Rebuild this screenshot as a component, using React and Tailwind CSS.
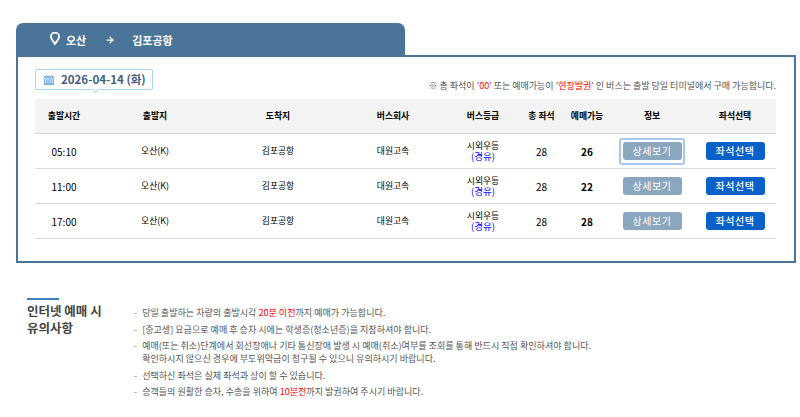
import React from 'react';
import { ArrowRight } from 'lucide-react';

const rows = [
  { time: '05:10', left: 26, focus: true },
  { time: '11:00', left: 22 },
  { time: '17:00', left: 28 },
];

const heads = ['출발시간', '출발지', '도착지', '버스회사', '버스등급', '총 좌석', '예매가능', '정보', '좌석선택'];
const widths = ['w-[58px]', 'w-[124px]', 'w-[122px]', 'w-[108px]', 'w-[72px]', 'w-[45px]', 'w-[46px]', 'w-[84px]', 'w-[82px]'];

function Note({ children }) {
  return (
    <li className="flex gap-[5px] leading-[13px]">
      <span className="text-[#888]">-</span>
      <p>{children}</p>
    </li>
  );
}

export default function App() {
  return (
    <div className="w-[800px] h-[417px] overflow-hidden bg-white pt-[23px] pl-[16px] text-black" style={{ fontFamily: '"Noto Sans CJK KR", "Noto Sans", sans-serif' }}>
      {/* Route tab */}
      <div className="w-[389px] h-[34px] bg-[#4b7499] rounded-t-[7px] flex items-center pl-[34px] text-white text-[11px] font-bold">
        <svg width="10" height="13" viewBox="0 0 11 14" fill="none" stroke="currentColor" strokeWidth="2" className="mr-[6px] -mt-[3px]">
          <path d="M5.5 13C3.5 10 1 7.6 1 5a4.500 4.500 0 0 1 9 0c0 2.600-2.500 5-4.500 8z" />
        </svg>
        <span>오산</span>
        <ArrowRight size={10} strokeWidth={3} className="ml-[19px] mr-[17px]" />
        <span>김포공항</span>
      </div>

      {/* Panel */}
      <div className="w-[780px] h-[208px] -mt-[2px] border-2 border-[#4b7499] bg-white pt-[12px] pl-[17px]">
        <div className="flex items-end w-[741px]">
          <div className="relative w-[118px] h-[21px] border border-[#a9d3f5] rounded-[2px] flex items-center pl-[8px] gap-[7px] text-[#44607f] text-[11.5px] font-bold">
            <svg width="10" height="10" viewBox="0 0 10 10" className="text-[#7db5e6]" fill="currentColor">
              <path d="M2 0h1v1.500H2zM7 0h1v1.500H7zM0 1h10v2H0zM0 3.500h10V10H0zM1 4.500v1h1.500v-1zM3.500 4.500v1h1v-1zM5.500 4.500v1h1v-1zM7.500 4.500v1H9v-1zM1 6.500v1h1.500v-1zM3.500 6.500v1h1v-1zM5.500 6.500v1h1v-1zM7.500 6.500v1H9v-1z" fillRule="evenodd" />
            </svg>
            <span>2026-04-14 (화)</span>
            <div className="absolute left-[57px] -bottom-[3px] w-[5px] h-[5px] rotate-45 bg-white border-r border-b border-[#a9d3f5]" />
          </div>
          <p className="ml-auto -mb-[2px] text-[9px] leading-[12px] text-[#555]">
            ※ 총 좌석이 '<span className="text-[#f00]">00</span>' 또는 예매가능이 '<span className="text-[#f00]">현장발권</span>' 인 버스는 출발 당일 터미널에서 구매 가능합니다.
          </p>
        </div>

        <table className="mt-[9px] w-[741px] table-fixed text-[8.8px] text-center">
          <thead>
            <tr className="h-[34px] bg-[#f3f3f3] border-b border-[#d5d5d5]">
              {heads.map((h, i) => (
                <th key={h} className={`${widths[i]} font-bold`}>{h}</th>
              ))}
            </tr>
          </thead>
          <tbody>
            {rows.map((r) => (
              <tr key={r.time} className="h-[35px] border-b border-[#dcdcdc]">
                <td className="pt-[1px] text-[10px]">{r.time}</td>
                <td className="pt-[1px]">오산(K)</td>
                <td className="pt-[1px]">김포공항</td>
                <td className="pt-[1px]">대원고속</td>
                <td className="pt-[1px] leading-[11px]">
                  시외우등
                  <br />
                  <span className="text-[#0000ff] text-[9.5px]">(경유)</span>
                </td>
                <td className="pt-[1px] text-[10px]">28</td>
                <td className="pt-[1px] text-[10px] font-bold">{r.left}</td>
                <td className="pt-[1px]">
                  <div className={`w-[66px] h-[27px] mx-auto flex items-center justify-center rounded-[3px] border-2 ${r.focus ? 'border-[#a5c5f2]' : 'border-transparent'}`}>
                    <button className="w-[59px] h-[18px] rounded-[3px] bg-[#8ba6bf] text-white text-[10px] leading-[18px] tracking-[0.6px]">
                      상세보기
                    </button>
                  </div>
                </td>
                <td className="pt-[1px]">
                  <button className="w-[59px] h-[18px] mx-auto block rounded-[3px] bg-[#0a60c9] text-white text-[10px] font-medium leading-[18px] tracking-[0.6px]">
                    좌석선택
                  </button>
                </td>
              </tr>
            ))}
          </tbody>
        </table>
      </div>

      {/* Notice */}
      <div className="flex mt-[35px] pl-[11px]">
        <div className="w-[107px]">
          <div className="w-[32px] h-[2px] bg-[#3f82c4]" />
          <h3 className="mt-[2px] text-[12.5px] leading-[17px] font-bold text-[#444]">
            인터넷 예매 시
            <br />
            유의사항
          </h3>
        </div>
        <ul className="pt-[8px] text-[9.05px] text-[#555] flex flex-col gap-[3.5px]">
          <Note>당일 출발하는 차량의 출발시각 <span className="text-[#f00]">20분 이전</span>까지 예매가 가능합니다.</Note>
          <Note>[중고생] 요금으로 예매 후 승차 시에는 학생증(청소년증)을 지참하셔야 합니다.</Note>
          <Note>
            예매(또는 취소)단계에서 회선장애나 기타 통신장애 발생 시 예매(취소)여부를 조회를 통해 반드시 직접 확인하셔야 합니다.
            <br />
            확인하시지 않으신 경우에 부도위약금이 청구될 수 있으니 유의하시기 바랍니다.
          </Note>
          <Note>선택하신 좌석은 실제 좌석과 상이 할 수 있습니다.</Note>
          <Note>승객들의 원활한 승차, 수송을 위하여 <span className="text-[#f00]">10분전</span>까지 발권하여 주시기 바랍니다.</Note>
        </ul>
      </div>
    </div>
  );
}
